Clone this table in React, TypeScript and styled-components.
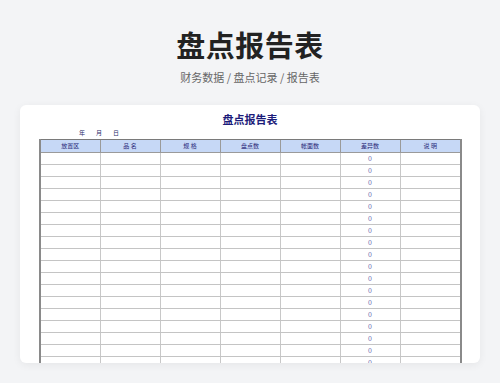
import { createGlobalStyle } from "styled-components";
import styled from "styled-components";

const GlobalStyle = createGlobalStyle`
  html, body {
    margin: 0;
    padding: 0;
    background: #f3f4f6;
    font-family: "Noto Sans CJK SC", "Noto Sans", sans-serif;
  }
`;

const Headers = ["放置区", "品 名", "规 格", "盘点数", "帐面数", "差异数", "说 明"];
const RowCount = 18;

const App = () => {
  return (
    <>
      <GlobalStyle />
      <Page>
        <Title>盘点报告表</Title>
        <Breadcrumb>财务数据 / 盘点记录 / 报告表</Breadcrumb>
        <Card>
          <SheetTitle>盘点报告表</SheetTitle>
          <DateRow>
            <span>年</span>
            <span>月</span>
            <span>日</span>
          </DateRow>
          <Sheet>
            <colgroup>
              {Headers.map((h, i) => (
                <col key={h} style={{ width: i === 6 ? 61 : 60 }} />
              ))}
            </colgroup>
            <thead>
              <tr>
                {Headers.map((h) => (
                  <HeadCell key={h}>{h}</HeadCell>
                ))}
              </tr>
            </thead>
            <tbody>
              {Array.from({ length: RowCount }).map((_, r) => (
                <tr key={r}>
                  {Headers.map((h, c) => (
                    <BodyCell key={h}>{c === 5 ? "0" : ""}</BodyCell>
                  ))}
                </tr>
              ))}
            </tbody>
          </Sheet>
        </Card>
      </Page>
    </>
  );
};

export default App;

const Page = styled.div`
  display: flex;
  flex-direction: column;
  align-items: center;
  padding-top: 24px;
  height: 383px;
  box-sizing: border-box;
  overflow: hidden;
`;

const Title = styled.h1`
  margin: 0;
  font-size: 29px;
  line-height: 40px;
  font-weight: 700;
  color: #222;
  letter-spacing: 0.5px;
`;

const Breadcrumb = styled.div`
  margin-top: 5px;
  font-size: 11px;
  line-height: 16px;
  color: #666;
`;

const Card = styled.div`
  margin-top: 20px;
  width: 460px;
  height: 258px;
  background: #fff;
  border-radius: 6px;
  box-shadow: 0 2px 8px rgba(0, 0, 0, 0.06);
  overflow: hidden;
  padding-top: 8px;
  box-sizing: border-box;
  display: flex;
  flex-direction: column;
`;

const SheetTitle = styled.div`
  text-align: center;
  font-size: 11px;
  line-height: 12px;
  font-weight: 700;
  color: #1c1c7a;
`;

const DateRow = styled.div`
  display: flex;
  gap: 11px;
  padding-left: 59px;
  margin-top: 2px;
  font-size: 6px;
  line-height: 12px;
  color: #2a2a6a;
`;

const Sheet = styled.table`
  margin-left: 19px;
  width: 421px;
  table-layout: fixed;
  border-collapse: collapse;
  border-left: 2px solid #8a8a8a;
  border-right: 2px solid #8a8a8a;
`;

const HeadCell = styled.th`
  height: 12px;
  padding: 0;
  background: #c6d8f6;
  border-top: 1px solid #7a7a7a;
  border-bottom: 1px solid #9a9a9a;
  border-left: 1px solid #9a9a9a;
  font-size: 6px;
  line-height: 10px;
  font-weight: 400;
  color: #2a2a7a;
  text-align: center;
`;

const BodyCell = styled.td`
  height: 11px;
  padding: 0;
  border-bottom: 1px solid #c4c4c4;
  border-left: 1px solid #c8c8c8;
  font-size: 7px;
  line-height: 11px;
  color: #6a6aae;
  text-align: center;
`;
